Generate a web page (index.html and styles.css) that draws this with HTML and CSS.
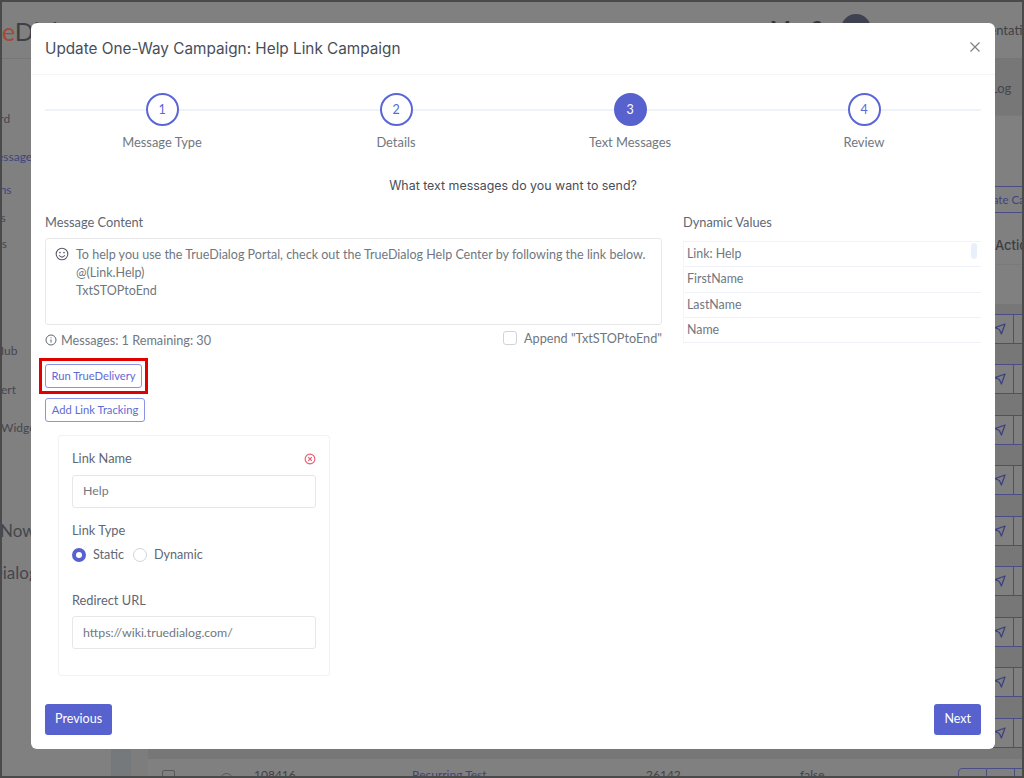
FILE: index.html
```html
<!DOCTYPE html>
<html lang="en">
<head>
<meta charset="utf-8">
<title>Update One-Way Campaign</title>
<link rel="stylesheet" href="styles.css">
</head>
<body>
<!-- Dimmed portal behind the dialog -->
<div class="portal">
  <header class="topbar">
    <span class="logo"><span class="logo-e">e</span>Dialog</span>
    <span class="top-icons">M ?</span>
    <span class="avatar"></span>
    <span class="top-user">Documentation</span>
  </header>
  <div class="portal-main">
    <nav class="sidebar">
      <span class="nav-item dashboard">Dashboard</span>
      <span class="nav-item messages accent">Messages</span>
      <span class="nav-item campaigns accent">Campaigns</span>
      <span class="nav-item lists">Lists</span>
      <span class="nav-item reports">Reports</span>
      <span class="nav-item hub">Hub</span>
      <span class="nav-item alert">Alert</span>
      <span class="nav-item widget">Widget</span>
      <span class="nav-item now">Now</span>
      <span class="nav-item dialog">Dialog</span>
    </nav>
    <div class="content">
      <div class="band log-band"><span>Log</span></div>
      <div class="band plain-band"></div>
      <div class="band create-band"><span class="create accent">Create Campaign</span></div>
      <div class="band actions-head"><span>Actions</span></div>
      <div class="band head-gap"></div>
      <div class="row"><span class="act"><svg viewBox="0 0 12 12" width="12" height="12"><path d="M11 1L1 4.6l4.4 1.9L7.4 11z"/></svg></span><span class="act-more"></span></div>
      <div class="row"><span class="act"><svg viewBox="0 0 12 12" width="12" height="12"><path d="M11 1L1 4.6l4.4 1.9L7.4 11z"/></svg></span><span class="act-more"></span></div>
      <div class="row"><span class="act"><svg viewBox="0 0 12 12" width="12" height="12"><path d="M11 1L1 4.6l4.4 1.9L7.4 11z"/></svg></span><span class="act-more"></span></div>
      <div class="row"><span class="act"><svg viewBox="0 0 12 12" width="12" height="12"><path d="M11 1L1 4.6l4.4 1.9L7.4 11z"/></svg></span><span class="act-more"></span></div>
      <div class="row"><span class="act"><svg viewBox="0 0 12 12" width="12" height="12"><path d="M11 1L1 4.6l4.4 1.9L7.4 11z"/></svg></span><span class="act-more"></span></div>
      <div class="row"><span class="act"><svg viewBox="0 0 12 12" width="12" height="12"><path d="M11 1L1 4.6l4.4 1.9L7.4 11z"/></svg></span><span class="act-more"></span></div>
      <div class="row"><span class="act"><svg viewBox="0 0 12 12" width="12" height="12"><path d="M11 1L1 4.6l4.4 1.9L7.4 11z"/></svg></span><span class="act-more"></span></div>
      <div class="row"><span class="act"><svg viewBox="0 0 12 12" width="12" height="12"><path d="M11 1L1 4.6l4.4 1.9L7.4 11z"/></svg></span><span class="act-more"></span></div>
      <div class="row row-end"><span class="act"><svg viewBox="0 0 12 12" width="12" height="12"><path d="M11 1L1 4.6l4.4 1.9L7.4 11z"/></svg></span><span class="act-more"></span></div>
      <div class="last-row">
        <span class="tick"></span>
        <span class="ring"></span>
        <span class="cell id">108416</span>
        <span class="cell name">Recurring Test</span>
        <span class="cell num">26142</span>
        <span class="cell flag">false</span>
        <span class="last-btn"><i></i><i></i><i></i></span>
      </div>
    </div>
  </div>
</div>

<main class="modal">
  <div class="modal-head">
    <h1 class="modal-title">Update One-Way Campaign: Help Link Campaign</h1>
    <svg class="close" viewBox="0 0 12 12" width="12" height="12"><path d="M1.5 1.5l9 9M10.5 1.5l-9 9"/></svg>
  </div>
  <div class="modal-body">
    <ol class="steps">
      <li class="step"><span class="dot">1</span><span class="step-name">Message Type</span></li>
      <li class="step"><span class="dot">2</span><span class="step-name">Details</span></li>
      <li class="step current"><span class="dot">3</span><span class="step-name">Text Messages</span></li>
      <li class="step"><span class="dot">4</span><span class="step-name">Review</span></li>
    </ol>
    <p class="question">What text messages do you want to send?</p>
    <div class="columns">
      <section class="compose">
        <div class="label">Message Content</div>
        <div class="message">
          <svg class="smile" viewBox="0 0 14 14" width="14" height="14"><circle cx="7" cy="7" r="5.8"/><path d="M4.2 8.3c.7 1.2 1.7 1.8 2.8 1.8s2.1-.6 2.8-1.8"/><circle class="eye" cx="5" cy="5.5" r=".85"/><circle class="eye" cx="9" cy="5.5" r=".85"/></svg>
          <div class="message-text">To help you use the TrueDialog Portal, check out the TrueDialog Help Center by following the link below.<br>@(Link.Help)<br>TxtSTOPtoEnd</div>
        </div>
        <div class="meta">
          <span class="count"><svg class="info" viewBox="0 0 12 12" width="12" height="12"><circle cx="6" cy="6" r="5"/><path d="M6 5.4v3.1M6 3.3v.9"/></svg>Messages: 1 Remaining: 30</span>
          <label class="append"><span class="checkbox"></span>Append "TxtSTOPtoEnd"</label>
        </div>
        <div class="highlight"><button class="outline">Run TrueDelivery</button></div>
        <button class="outline add-link">Add Link Tracking</button>
        <div class="link-card">
          <div class="card-head"><span class="label">Link Name</span>
            <svg class="remove" viewBox="0 0 12 12" width="12" height="12"><circle cx="6" cy="6" r="4.9"/><path d="M4.2 4.2l3.6 3.6M7.8 4.2l-3.6 3.6"/></svg>
          </div>
          <div class="input">Help</div>
          <div class="label type-label">Link Type</div>
          <div class="radios">
            <span class="radio on"></span><span class="radio-name">Static</span>
            <span class="radio"></span><span class="radio-name">Dynamic</span>
          </div>
          <div class="label url-label">Redirect URL</div>
          <div class="input url-input">https://wiki.truedialog.com/</div>
        </div>
      </section>
      <aside class="values">
        <div class="label">Dynamic Values</div>
        <div class="value-wrap">
          <ul class="value-list">
            <li>Link: Help</li>
            <li>FirstName</li>
            <li>LastName</li>
            <li>Name</li>
          </ul>
          <span class="thumb"></span>
        </div>
      </aside>
    </div>
  </div>
  <div class="modal-foot">
    <button class="solid">Previous</button>
    <button class="solid">Next</button>
  </div>
</main>
</body>
</html>
```
FILE: styles.css
```css
* { box-sizing: border-box; }

html, body {
  margin: 0;
  height: 100%;
  overflow: hidden;
}

body {
  position: relative;
  width: 1024px;
  height: 778px;
  background: #808080;
  font-family: Lato, "Noto Sans", sans-serif;
  color: #707781;
}

/* Portal behind the dialog, drawn in its dimmed colours */
.portal {
  width: 1024px;
  height: 778px;
  border: 2px solid #4a4a4a;
  background: #808080;
  color: #45464c;
  overflow: hidden;
  white-space: nowrap;
  display: flex;
  flex-direction: column;
}

.accent { color: #40447c; }

.topbar {
  flex: none;
  height: 57px;
  display: flex;
  align-items: flex-start;
  border-bottom: 1px solid #767676;
}

.logo {
  flex: none;
  width: 768px;
  margin: 10px 0 0 0;
  font: 400 25px/38px Lato, sans-serif;
  color: #3f4045;
}

.logo-e { color: #a34a36; }

.top-icons {
  flex: none;
  width: 71px;
  margin-top: 16px;
  font: 700 22px/24px Lato, sans-serif;
  letter-spacing: 8px;
  color: #35363c;
}

.avatar {
  flex: none;
  width: 30px;
  height: 30px;
  margin-top: 12px;
  border-radius: 50%;
  background: #3e4150;
}

.top-user {
  margin: 20px 0 0 77px;
  font-size: 13px;
  line-height: 17px;
  color: #3f4045;
}

.portal-main {
  flex: 1;
  display: flex;
  min-height: 0;
}

.sidebar {
  flex: none;
  width: 146px;
  display: flex;
  flex-direction: column;
  align-items: flex-start;
  font-size: 12px;
  line-height: 16px;
  background: linear-gradient(90deg, transparent 109px, #75797c 109px 129px, #7d7d7d 129px);
}

.dashboard { margin: 52px 0 0 -49px; }
.messages { margin: 22px 0 0 -16px; }
.campaigns { margin: 17px 0 0 -48px; }
.lists { margin: 12px 0 0 -20px; }
.reports { margin: 10px 0 0 -36px; }
.hub { margin: 91px 0 0 -7px; }
.alert { margin: 23px 0 0 -12px; }
.widget { margin: 22px 0 0 -1px; }
.now, .dialog { font-size: 17px; line-height: 22px; }
.now { margin: 84px 0 0 -2px; }
.dialog { margin: 20px 0 0 -12px; }

.content {
  flex: 1;
  min-width: 0;
  display: flex;
  flex-direction: column;
}

/* Visible text in these bands starts where the dialog's right edge falls */
.band { flex: none; padding-left: 843px; }

.log-band {
  height: 56px;
  background: #777;
  font-size: 13px;
  line-height: 58px;
}

.plain-band { height: 71px; border-top: 1px solid #7a7a7a; }

.create-band { height: 27px; padding-left: 815px; }

.create {
  display: block;
  width: 120px;
  height: 27px;
  padding-left: 11px;
  border: 1px solid #4a4d86;
  border-radius: 3px 0 0 3px;
  font-size: 11.5px;
  line-height: 25px;
}

.actions-head {
  height: 52px;
  padding-left: 847px;
  font: 500 13px/65px Inter, sans-serif;
  color: #3c3d42;
  border-bottom: 1px solid #7a7a7a;
}

.head-gap { height: 49px; background: linear-gradient(#808080 0 39px, #777 39px); }

.row {
  flex: none;
  display: flex;
  height: 50.45px;
  padding-left: 808px;
  background: linear-gradient(#808080 0 30px, #777 30px);
}

.row-end { background: linear-gradient(#808080 0 30px, #777 30px 41px, #808080 41px); }

.act {
  flex: none;
  display: flex;
  align-items: center;
  justify-content: flex-end;
  width: 58px;
  height: 30px;
  padding-right: 7px;
  border: 1px solid #4a4d86;
}

.act svg { fill: none; stroke: #3c4080; stroke-width: 1.3; stroke-linejoin: round; }

.act-more {
  flex: none;
  width: 40px;
  height: 30px;
  border: 1px solid #4a4d86;
  border-left: 0;
}

.last-row {
  flex: none;
  height: 30px;
  display: flex;
  align-items: flex-start;
  font-size: 12px;
  line-height: 16px;
}

.tick {
  flex: none;
  width: 13px;
  height: 13px;
  margin: 2px 0 0 14px;
  border: 1px solid #595959;
  border-radius: 2px;
}

.ring {
  flex: none;
  width: 13px;
  height: 13px;
  margin: 5px 0 0 45px;
  border: 1px solid #595959;
  border-radius: 50%;
}

.cell { flex: none; margin-top: -1px; color: #3f4045; }
.id { margin-left: 21px; width: 158px; }
.name { width: 234px; color: #40447c; }
.num { width: 154px; }
.flag { width: 158px; }

.last-btn {
  flex: none;
  display: flex;
  height: 30px;
}

.last-btn i {
  width: 28px;
  height: 30px;
  border: 1px solid #4a4d86;
  border-left: 0;
}

.last-btn i:first-child {
  width: 29px;
  border-left: 1px solid #4a4d86;
  border-top-left-radius: 4px;
}

/* Dialog */
.modal {
  position: absolute;
  left: 31px;
  top: 23px;
  width: 964px;
  height: 726px;
  background: #fff;
  border-radius: 6px;
  display: flex;
  flex-direction: column;
  overflow: hidden;
}

.modal-head {
  flex: none;
  height: 52px;
  padding: 0 14px;
  display: flex;
  align-items: center;
  justify-content: space-between;
  border-bottom: 1px solid #f3f5f9;
}

.modal-title {
  margin: 1px 0 0;
  font: 400 15.3px/20px Inter, sans-serif;
  color: #484e58;
}

.close { fill: none; stroke: #7b8088; stroke-width: 1.2; margin-top: -4px; }

.modal-body {
  flex: 1;
  min-height: 0;
  padding: 18px 14px 0;
}

.steps {
  list-style: none;
  margin: 0;
  padding: 0;
  display: flex;
  justify-content: space-between;
  background: linear-gradient(#eff3f9, #eff3f9) 0 16px / 100% 2px no-repeat;
}

.step {
  width: 234px;
  display: flex;
  flex-direction: column;
  align-items: center;
}

.dot {
  width: 33px;
  height: 33px;
  border-radius: 50%;
  border: 2px solid #5a66d6;
  background: #fff;
  color: #5a66d6;
  font-size: 12.5px;
  display: flex;
  align-items: center;
  justify-content: center;
}

.current .dot { background: #5762cf; border-color: #5762cf; color: #fff; }

.step-name {
  margin-top: 8px;
  font-size: 12.9px;
  line-height: 17px;
}

.question {
  margin: 27px 0 0;
  text-align: center;
  font: 400 12.4px/16px Inter, sans-serif;
  color: #484e58;
}

.columns {
  display: flex;
  gap: 21px;
  margin-top: 20px;
}

.compose { width: 617px; flex: none; }
.values { flex: 1; }

.label { font-size: 12.8px; line-height: 17px; color: #5f6773; }

.message {
  margin-top: 7px;
  height: 87px;
  border: 1px solid #e8e8ea;
  border-radius: 3px;
  padding: 7px 9px;
  display: flex;
  gap: 7px;
}

.smile { flex: none; margin-top: 1px; fill: none; stroke: #585e68; stroke-width: 1.1; }
.smile .eye { fill: #585e68; stroke: none; }

.message-text { font-size: 12.53px; line-height: 18.2px; white-space: nowrap; }

.meta {
  margin-top: 6px;
  height: 18px;
  display: flex;
  justify-content: space-between;
  font-size: 12.68px;
  line-height: 18px;
}

.count { display: flex; align-items: center; gap: 4px; }
.info { fill: none; stroke: #5f6773; stroke-width: 1; }

.append { display: flex; align-items: center; gap: 7px; margin-top: -4px; }

.checkbox {
  width: 14px;
  height: 14px;
  border: 1px solid #d1d5db;
  border-radius: 3px;
}

.outline {
  height: 24px;
  padding: 0;
  border: 1px solid #8a93e6;
  border-radius: 3px;
  background: #fff;
  color: #5f6ad6;
  font: 400 11.2px/1 Lato, sans-serif;
}

.highlight {
  width: 109px;
  margin: 9px 0 0 -6px;
  padding: 3px;
  border: 3px solid #e00000;
  font-size: 0;
}

.highlight .outline { width: 97px; }
.add-link { display: block; margin-top: 4px; width: 100px; }

.link-card {
  width: 272px;
  height: 241px;
  margin: 13px 0 0 13px;
  padding: 14px 13px;
  border: 1px solid #f1f2f5;
  border-radius: 3px;
}

.card-head { display: flex; justify-content: space-between; align-items: center; }
.remove { fill: none; stroke: #f0566e; stroke-width: 1.1; }

.input {
  margin-top: 8px;
  height: 33px;
  padding: 0 10px;
  border: 1px solid #e5e7eb;
  border-radius: 3px;
  font-size: 12.35px;
  line-height: 29px;
}

.url-input { margin-top: 7px; line-height: 31px; }

.type-label { margin-top: 14px; }

.radios {
  margin-top: 7px;
  display: flex;
  align-items: center;
  font-size: 12.6px;
  line-height: 18px;
}

.radio {
  width: 14px;
  height: 14px;
  border-radius: 50%;
  border: 1px solid #d1d5db;
}

.radio.on { border: 4.5px solid #5762cf; background: #fff; }
.radio-name { margin: 0 9px 0 7px; color: #5f6773; }

.url-label { margin-top: 28px; }

.value-wrap { position: relative; margin-top: 10px; }

.value-list {
  list-style: none;
  margin: 0;
  padding: 0;
  border-top: 1px solid #f1f3f8;
}

.value-list li {
  height: 25.3px;
  padding: 0 3px;
  font-size: 12.4px;
  line-height: 24.4px;
  border-bottom: 1px solid #eff2f8;
  border-left: 1px solid #f5f6f9;
}

.thumb {
  position: absolute;
  right: 4px;
  top: 2px;
  width: 6px;
  height: 16px;
  border-radius: 3px;
  background: #eaf0fb;
}

.modal-foot {
  flex: none;
  height: 45px;
  padding: 0 14px;
  display: flex;
  justify-content: space-between;
  align-items: flex-start;
}

.solid {
  height: 31px;
  padding: 0 10px;
  border: 0;
  border-radius: 3px;
  background: #5762cf;
  color: #fff;
  font: 400 12.5px/1 Lato, sans-serif;
}
```
